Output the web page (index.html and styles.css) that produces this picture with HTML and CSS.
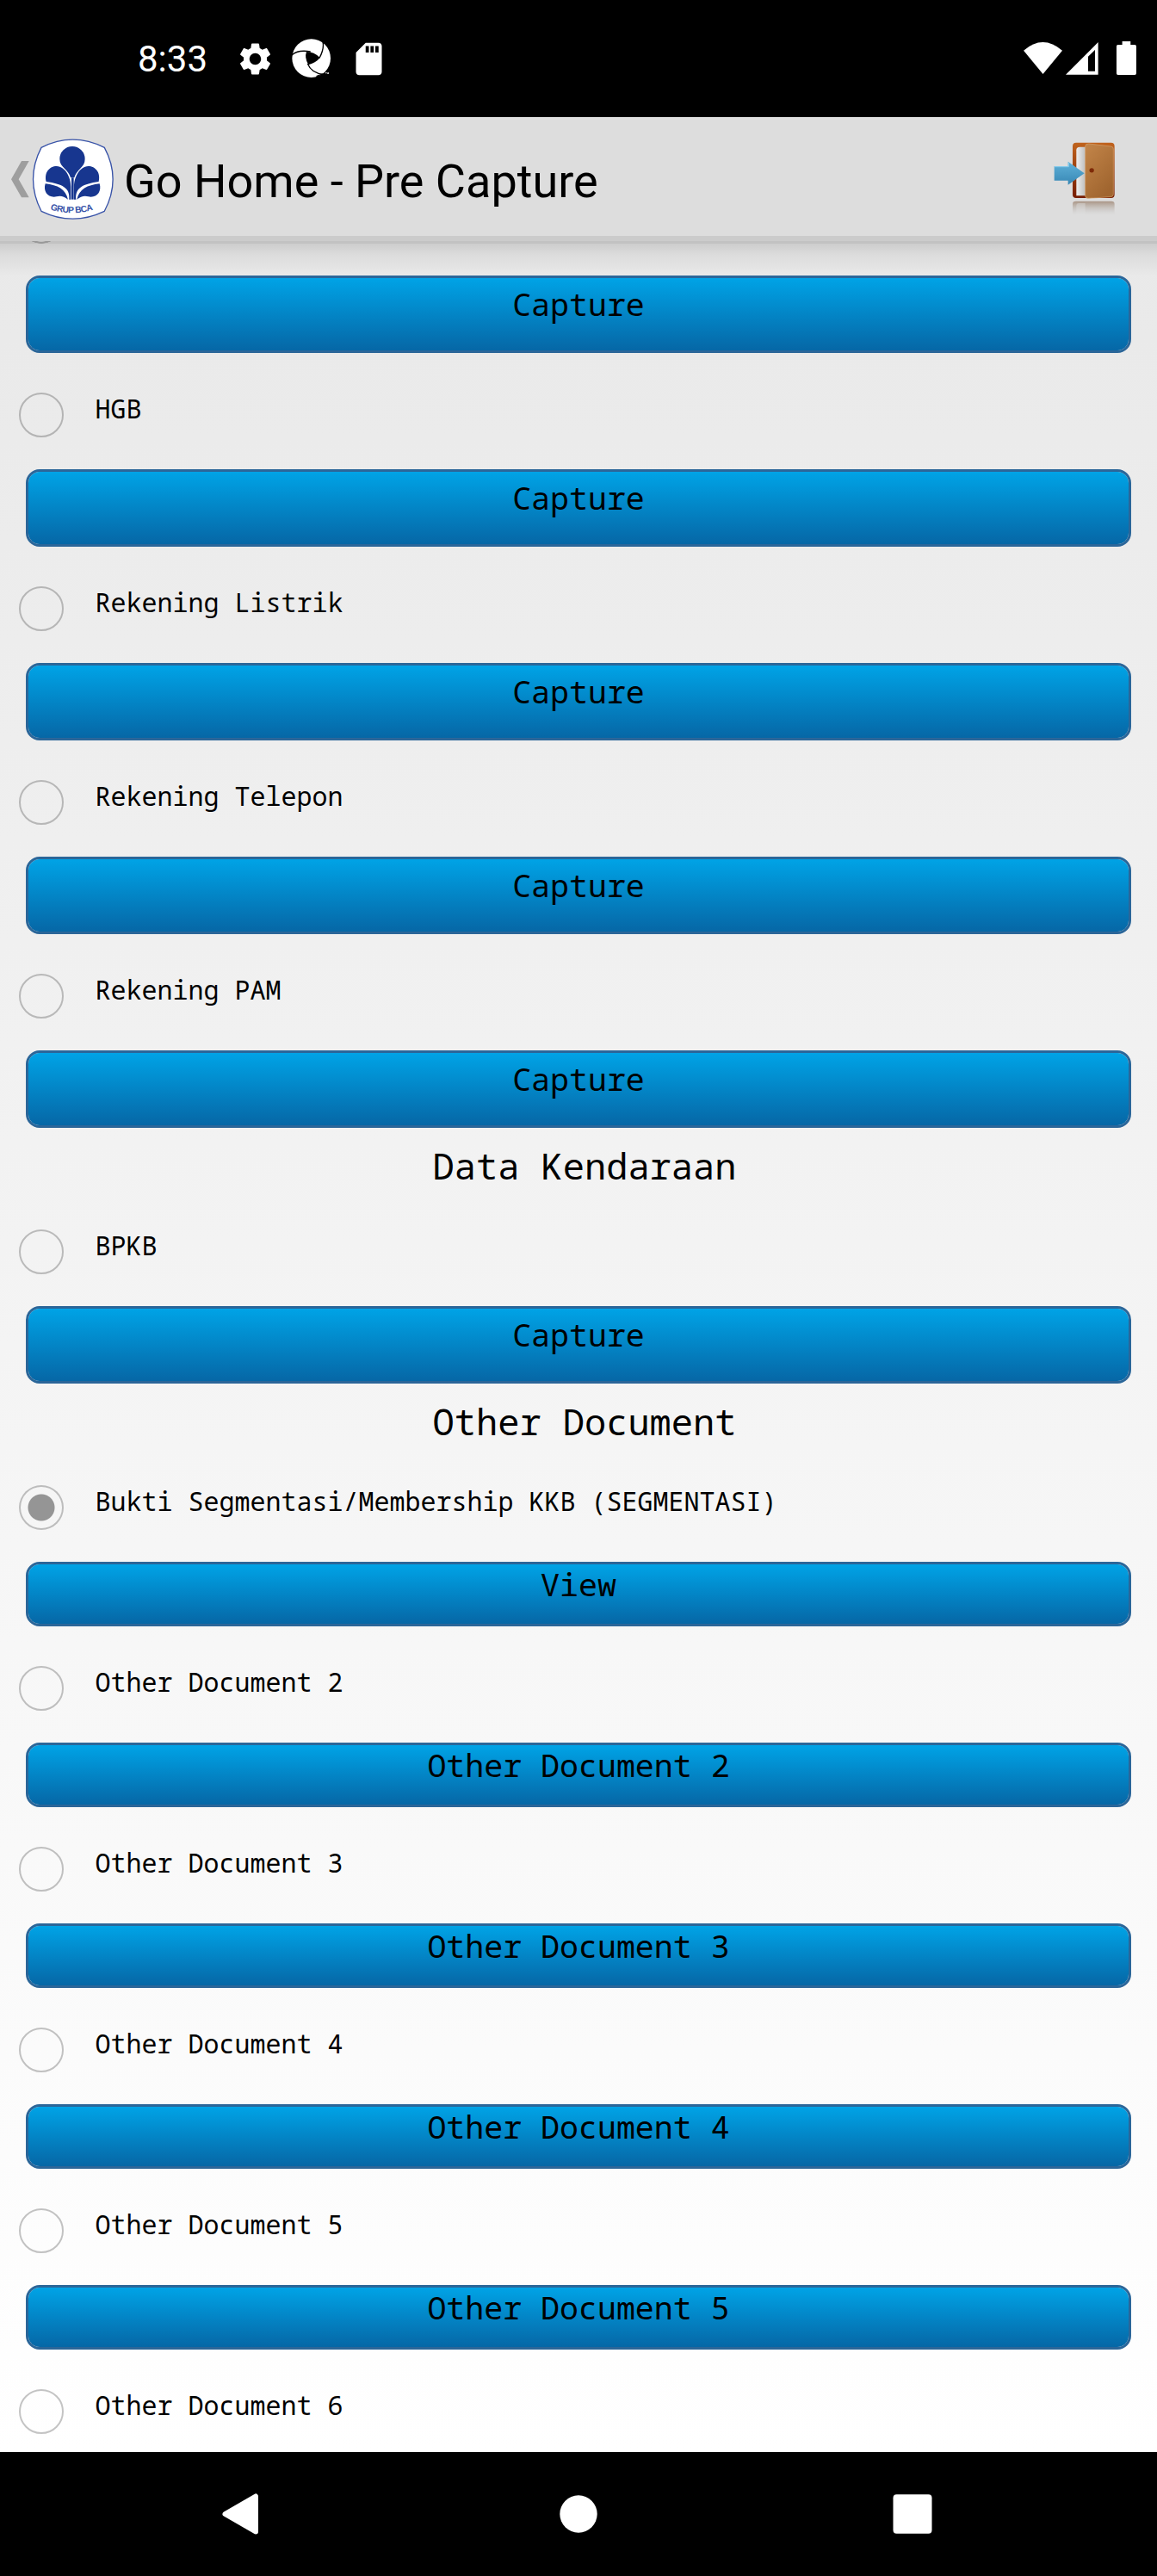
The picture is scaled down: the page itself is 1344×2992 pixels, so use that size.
FILE: index.html
```html
<!DOCTYPE html>
<html lang="id">
<head>
<meta charset="utf-8">
<title>Go Home - Pre Capture</title>
<link rel="stylesheet" href="styles.css">
</head>
<body>
<div class="status">
  <span class="clock">8:33</span>
  <svg class="gear" viewBox="0 0 24 24"><path d="M19.14 12.94c.04-.3.06-.61.06-.94 0-.32-.02-.64-.07-.94l2.03-1.58c.18-.14.23-.41.12-.61l-1.92-3.32c-.12-.22-.37-.29-.59-.22l-2.39.96c-.5-.38-1.03-.7-1.62-.94L14.4 2.81c-.04-.24-.24-.41-.48-.41h-3.84c-.24 0-.43.17-.47.41l-.36 2.54c-.59.24-1.13.57-1.62.94l-2.39-.96c-.22-.08-.47 0-.59.22L2.74 8.87c-.12.21-.08.47.12.61l2.03 1.58c-.05.3-.09.63-.09.94s.02.64.07.94l-2.03 1.58c-.18.14-.23.41-.12.61l1.92 3.32c.12.22.37.29.59.22l2.39-.96c.5.38 1.03.7 1.62.94l.36 2.54c.05.24.24.41.48.41h3.84c.24 0 .44-.17.47-.41l.36-2.54c.59-.24 1.13-.56 1.62-.94l2.39.96c.22.08.47 0 .59-.22l1.92-3.32c.12-.22.07-.47-.12-.61l-2.01-1.58zM12 15.6c-1.98 0-3.6-1.62-3.6-3.6s1.62-3.6 3.6-3.6 3.6 1.62 3.6 3.6-1.62 3.6-3.6 3.6z"/></svg>
  <svg class="aperture" viewBox="27 17 138 138"><circle cx="95" cy="85" r="67"/><path class="cut" d="M78 62Q104 62 125 83Q112 100 85 108Q70 84 78 62Z"/><path class="gap" d="M24 76Q46 54 92 62M134 22Q142 50 123 84M82 104Q96 138 138 141"/><path class="cut" d="M114 153L112 146Q124 141 136 138L134 143Q124 143 114 153Z"/><path d="M144 135h5v3h-5zM151 135h5v5h-2v-2h-1v2h-2z"/></svg>
  <svg class="sd" viewBox="0 0 24 24"><path d="M18 2h-8L4.02 8 4 20c0 1.1.9 2 2 2h12c1.1 0 2-.9 2-2V4c0-1.1-.9-2-2-2zm-6 6h-2V4h2v4zm3 0h-2V4h2v4zm3 0h-2V4h2v4z"/></svg>
  <svg class="signals" viewBox="117 144 394 118"><path d="M117 176Q184 118 252 176L184.500 258Z"/><path fill-rule="evenodd" d="M264 260L377 147V260ZM342 197V248H366V174Z"/><path d="M461 144H490V156H505Q510 156 510 161V256Q510 261 505 261H446Q441 261 441 256V161Q441 156 446 156H461Z"/></svg>
</div>
<header class="bar">
  <svg class="back" viewBox="0 0 62 128"><path d="M36 0H62L26 64L62 127H36L0 64Z"/></svg>
  <svg class="logo" viewBox="110 64 286 286">
    <path class="plate" d="M143 95Q252 40 363 95Q422 205 363 317Q252 370 143 317Q86 205 143 95Z"/>
    <g class="leaf">
      <path d="M245 200C238 170 207 165 207 135A44 44 0 0 1 295 135C295 165 266 170 258 200Z"/>
      <path d="M240 276C244 235 215 222 160 214C152 182 172 160 196 160C228 162 246 200 246 232V276Z"/>
      <path d="M264 276C260 235 289 222 343 214C351 182 331 160 307 160C275 162 257 200 257 232V276Z"/>
      <path d="M157 221C200 226 228 240 236 276C222 264 208 262 196 266C168 272 148 250 157 221Z"/>
      <path d="M346 221C303 226 275 240 267 276C281 264 295 262 307 266C335 272 355 250 346 221Z"/>
      <path d="M248 200H256V276H248Z"/>
    </g>
    <path id="arc" fill="none" d="M174 311Q252 335 332 310"/>
    <text class="mark"><textPath href="#arc" textLength="152">GRUP BCA</textPath></text>
  </svg>
  <h1>Go Home - Pre Capture</h1>
  <svg class="door" viewBox="220 490 220 265">
    <defs>
      <linearGradient id="frame" x2="0" y2="1"><stop stop-color="#c0631d"/><stop offset="1" stop-color="#761c00"/></linearGradient>
      <linearGradient id="leaf" x2=".6" y2="1"><stop stop-color="#c38549"/><stop offset="1" stop-color="#a0652f"/></linearGradient>
      <linearGradient id="gapfill"><stop stop-color="#eee"/><stop offset="1" stop-color="#b5b5b5"/></linearGradient>
      <linearGradient id="arrow" x2="0" y2="1"><stop stop-color="#5fb2da"/><stop offset="1" stop-color="#3887b4"/></linearGradient>
      <linearGradient id="mirror" x2="0" y2="1"><stop stop-color="#987c66" stop-opacity=".75"/><stop offset="1" stop-color="#bbb" stop-opacity="0"/></linearGradient>
    </defs>
    <rect x="289" y="498" width="146" height="193" rx="12" fill="url(#frame)"/>
    <path d="M302 683V524Q302 513 314 513H340V683Z" fill="url(#gapfill)"/>
    <path d="M333 512Q333 501 345 502L423 511Q431 512 431 520V678Q431 686 423 687L344 692Q333 692 333 684Z" fill="url(#leaf)" stroke="#d6a16d" stroke-width="2"/>
    <circle cx="355.500" cy="594.500" r="8" fill="#7e2a08"/>
    <path d="M225 580H273V564L330 605L273 645V630H225Z" fill="url(#arrow)"/>
    <path d="M226 582H275V568" fill="none" stroke="#8dd0ee" stroke-width="3"/>
    <path d="M289 750V712Q289 702 300 702H424Q435 702 435 712V750Z" fill="url(#mirror)"/>
    <path d="M302 750V718Q302 709 311 709H333V750Z" fill="#ddd" opacity=".45"/>
  </svg>
</header>
<main class="list">
  <div class="edge"></div>
  <section class="tall">
    <button>Capture</button>
    <label><i></i>HGB</label>
    <button>Capture</button>
    <label><i></i>Rekening Listrik</label>
    <button>Capture</button>
    <label><i></i>Rekening Telepon</label>
    <button>Capture</button>
    <label><i></i>Rekening PAM</label>
    <button>Capture</button>
    <h2>Data Kendaraan</h2>
    <label><i></i>BPKB</label>
    <button>Capture</button>
    <h2>Other Document</h2>
  </section>
  <section class="short">
    <label><i class="on"></i>Bukti Segmentasi/Membership KKB (SEGMENTASI)</label>
    <button>View</button>
    <label><i></i>Other Document 2</label>
    <button>Other Document 2</button>
    <label><i></i>Other Document 3</label>
    <button>Other Document 3</button>
    <label><i></i>Other Document 4</label>
    <button>Other Document 4</button>
    <label><i></i>Other Document 5</label>
    <button>Other Document 5</button>
    <label><i></i>Other Document 6</label>
  </section>
</main>
<nav class="nav">
  <svg viewBox="4 0 46 48"><path stroke-linejoin="round" stroke-width="6" stroke="#fff" d="M40 3.500V44.500L4.500 24Z"/></svg>
  <svg viewBox="0 0 46 48"><circle cx="23" cy="24" r="21.700"/></svg>
  <svg viewBox="0 0 46 48"><rect x=".5" y="1.300" width="45" height="45.500" rx="4"/></svg>
</nav>
</body>
</html>
```
FILE: styles.css
```css
* { box-sizing: border-box; }
body {
  margin: 0;
  width: 1344px;
  height: 2992px;
  overflow: hidden;
  display: flex;
  flex-direction: column;
  background: #000;
  color: #000;
  font-family: "Noto Sans Mono", "Droid Sans Mono", "DejaVu Sans Mono", monospace;
}
svg { display: block; flex: none; }
h1, h2 { margin: 0; font-weight: 400; }

/* status bar */
.status { height: 136px; flex: none; display: flex; align-items: center; padding-left: 160px; fill: #fff; }
.clock { width: 113.5px; color: #fff; font: 42px/50px Roboto, sans-serif; padding-top: 2px; }
.gear, .sd { width: 45px; height: 45px; }
.aperture { width: 46px; height: 46px; margin: 0 20.600px; }
.cut { fill: #000; }
.gap { fill: none; stroke: #000; stroke-width: 4; }
.signals { width: 131.300px; height: 39.300px; margin: 0 24px 0 auto; }

/* title bar */
.bar { height: 138px; flex: none; display: flex; align-items: flex-start; padding-left: 13px; background: #ddd; border-top: 3px solid #e1e1e1; }
.back { width: 20.700px; height: 42.700px; margin-top: 48px; fill: #9e9e9e; }
.logo { width: 95.300px; height: 95.300px; margin: 22.300px 0 0 3px; }
.plate { fill: #fff; stroke: #3853a8; stroke-width: 4; }
.leaf { fill: #17368f; }
.mark { fill: #3853a8; font: bold 31px "Liberation Sans", sans-serif; }
h1 { margin: 40px 0 0 12px; font: 54px/64px Roboto, sans-serif; white-space: nowrap; }
.door { width: 73.300px; height: 88.300px; margin: 24.300px 47.400px 0 auto; }

/* document list */
.list { height: 2574px; flex: none; overflow: hidden; background: linear-gradient(#e9e9e9, #fff); }
.edge {
  height: 46px;
  border-top: 6px solid #cbcbcb;
  background: radial-gradient(circle at 48px -23px, transparent 23.500px, #999 24px 25.500px, transparent 26px) 0 0 / 100% 9px no-repeat,
    linear-gradient(#c2c2c2 3px, #cdcdcd 3px, #dcdcdc 16px, #e9e9e9);
}
button {
  display: flex;
  justify-content: center;
  align-items: flex-start;
  width: 1284px;
  height: 90px;
  margin: 0 30px;
  padding: 8px 0 0;
  border: 3px solid #2b6699;
  border-radius: 16px;
  background: linear-gradient(#00a3e6, #0667a6) padding-box;
  font: 36.600px/44px "Noto Sans Mono", "Droid Sans Mono", "DejaVu Sans Mono", monospace;
  color: #000;
}
.short button { height: 75px; padding-top: 1px; }
label { display: flex; align-items: flex-start; height: 135px; padding: 46px 0 0 22px; font-size: 30px; line-height: 37px; white-space: pre; }
label i { width: 52px; height: 52px; margin-right: 36.5px; border: 2px solid rgba(0, 0, 0, .23); border-radius: 50%; }
label .on { background: radial-gradient(circle, #959595 15px, transparent 16px); }
h2 { height: 72px; padding: 19px 0 0 14px; font-size: 42px; line-height: 50px; text-align: center; }

/* navigation bar */
.nav { flex: 1; display: flex; justify-content: space-between; align-items: center; padding: 0 261px; fill: #fff; }
.nav svg { width: 46px; height: 48px; overflow: visible; }
.nav svg:first-child { margin-right: 0; }
```
